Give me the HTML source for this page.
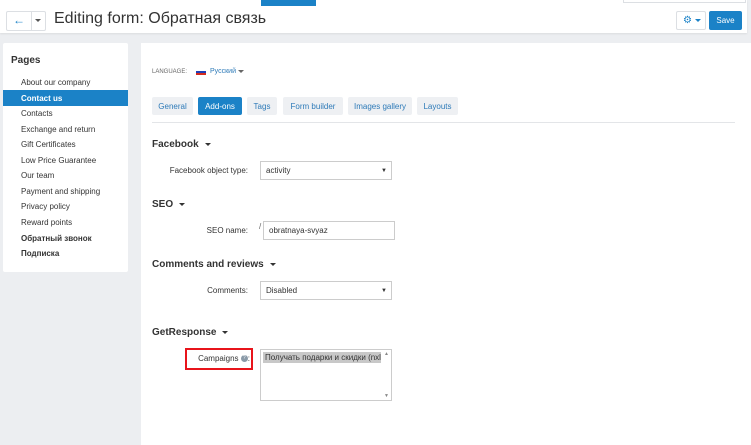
<!DOCTYPE html>
<html><head><meta charset="utf-8"><style>
*{box-sizing:border-box;margin:0;padding:0}
body{width:751px;height:445px;background:#eceef1;font-family:"Liberation Sans","Noto Sans CJK SC",sans-serif;position:relative;overflow:hidden;color:#333}
.a{position:absolute}
.hdr{left:0;top:0;width:747px;height:33px;background:#fff;box-shadow:0 1px 2px rgba(0,0,0,.08)}
.btn{border:1px solid #dcdfe3;background:#fff;border-radius:2px}
.side{left:3px;top:43px;width:125px;height:229px;background:#fff;border-radius:2px}
.side .it{position:absolute;left:18px;font-size:8px;color:#333}
.main{left:141px;top:43px;width:610px;height:402px;background:#fff}
.tab{top:97px;height:18px;background:#eef0f3;color:#2d7ab8;font-size:8px;line-height:19px;text-align:center;border-radius:2px}
.h{font-size:10px;font-weight:bold;color:#333}
.lbl{font-size:8px;color:#333;text-align:right;white-space:nowrap}
.sel{border:1px solid #ccc;background:#fff;font-size:8px;line-height:18px;padding-left:5px;height:19px}
.car{display:inline-block;border-left:3px solid transparent;border-right:3px solid transparent;border-top:3px solid #333;vertical-align:middle;margin-left:6px}
</style></head><body>
<div class="a hdr"></div>
<div class="a" style="left:261px;top:0;width:55px;height:6px;background:#1b82c7"></div>
<div class="a" style="left:623px;top:0;width:123px;height:3px;border:1px solid #dcdfe3;border-top:0;background:#fff"></div>
<div class="a btn" style="left:6px;top:11px;width:40px;height:20px"></div>
<div class="a" style="left:31px;top:11px;width:1px;height:20px;background:#dcdfe3"></div>
<div class="a" style="left:13px;top:13px;font-size:12px;color:#1b82c7;font-weight:bold">&#8592;</div>
<div class="a" style="left:35px;top:19px;border-left:3px solid transparent;border-right:3px solid transparent;border-top:3px solid #555"></div>
<div class="a" style="left:54px;top:10px;font-size:16px;color:#333">Editing form: Обратная связь</div>
<div class="a btn" style="left:676px;top:11px;width:30px;height:19px;color:#1b82c7;font-size:10px;line-height:17px;padding-left:6px">&#9881;<span class="car" style="margin-left:3px;border-top-color:#1b82c7"></span></div>
<div class="a" style="left:709px;top:11px;width:33px;height:19px;background:#1b82c7;color:#fff;font-size:8px;line-height:19px;text-align:center;border-radius:2px">Save</div>

<div class="a side">
<div style="position:absolute;left:8px;top:12px;font-size:10px;font-weight:bold">Pages</div>
<div style="position:absolute;left:0;top:47px;width:125px;height:16px;background:#1b82c7"></div>
<div class="it" style="top:35px">About our company</div>
<div class="it" style="top:51px;color:#fff;font-weight:bold">Contact us</div>
<div class="it" style="top:66px">Contacts</div>
<div class="it" style="top:82px">Exchange and return</div>
<div class="it" style="top:97px">Gift Certificates</div>
<div class="it" style="top:113px">Low Price Guarantee</div>
<div class="it" style="top:128px">Our team</div>
<div class="it" style="top:144px">Payment and shipping</div>
<div class="it" style="top:159px">Privacy policy</div>
<div class="it" style="top:175px">Reward points</div>
<div class="it" style="top:191px;font-weight:bold">Обратный звонок</div>
<div class="it" style="top:206px;font-weight:bold">Подписка</div>
</div>

<div class="a main"></div>
<div class="a" style="left:152px;top:69px;font-size:6px;color:#666">LANGUAGE:</div>
<div class="a" style="left:196px;top:69px;width:10px;height:6px;background:linear-gradient(#fff 33%,#1e3fb8 33%,#1e3fb8 66%,#d52b1e 66%)"></div>
<div class="a" style="left:210px;top:68px;font-size:7px;color:#2d7ab8">Русский<span class="car" style="margin-left:2px;border-top-color:#666"></span></div>
<div class="a tab" style="left:152px;width:41px">General</div>
<div class="a tab" style="left:198px;width:44px;background:#1b82c7;color:#fff">Add-ons</div>
<div class="a tab" style="left:247px;width:30px">Tags</div>
<div class="a tab" style="left:283px;width:60px">Form builder</div>
<div class="a tab" style="left:348px;width:64px">Images gallery</div>
<div class="a tab" style="left:417px;width:41px">Layouts</div>
<div class="a" style="left:152px;top:122px;width:583px;height:1px;background:#e3e5e8"></div>

<div class="a h" style="left:152px;top:139px">Facebook<span class="car" style="border-top-color:#333"></span></div>
<div class="a lbl" style="left:150px;top:166px;width:98px">Facebook object type:</div>
<div class="a sel" style="left:260px;top:161px;width:132px">activity<span style="position:absolute;right:4px;top:0;font-size:6px">&#9660;</span></div>

<div class="a h" style="left:152px;top:199px">SEO<span class="car"></span></div>
<div class="a lbl" style="left:150px;top:226px;width:98px">SEO name:</div>
<div class="a" style="left:259px;top:222px;font-size:8px;color:#666">/</div>
<div class="a sel" style="left:263px;top:221px;width:132px">obratnaya-svyaz</div>

<div class="a h" style="left:152px;top:259px">Comments and reviews<span class="car"></span></div>
<div class="a lbl" style="left:150px;top:286px;width:98px">Comments:</div>
<div class="a sel" style="left:260px;top:281px;width:132px">Disabled<span style="position:absolute;right:4px;top:0;font-size:6px">&#9660;</span></div>

<div class="a h" style="left:152px;top:327px">GetResponse<span class="car"></span></div>
<div class="a" style="left:185px;top:348px;width:68px;height:22px;border:2px solid #e8141b"></div>
<div class="a lbl" style="left:180px;top:354px;width:70px">Campaigns <span style="display:inline-block;width:7px;height:7px;border-radius:50%;background:#8a9aa8;color:#fff;font-size:5px;line-height:7px;text-align:center;vertical-align:middle">?</span>:</div>
<div class="a" style="left:260px;top:349px;width:132px;height:52px;border:1px solid #ccc;background:#fff;overflow:hidden">
<div style="position:absolute;left:2px;top:2px;width:118px;height:11px;background:#c8c8c8;font-size:8px;line-height:11px;padding-left:2px;white-space:nowrap;overflow:hidden">Получать подарки и скидки (nxl</div>
<div style="position:absolute;right:2px;top:1px;font-size:5px;color:#888">&#9650;</div>
<div style="position:absolute;right:2px;bottom:1px;font-size:5px;color:#888">&#9660;</div>
</div>
</body></html>
